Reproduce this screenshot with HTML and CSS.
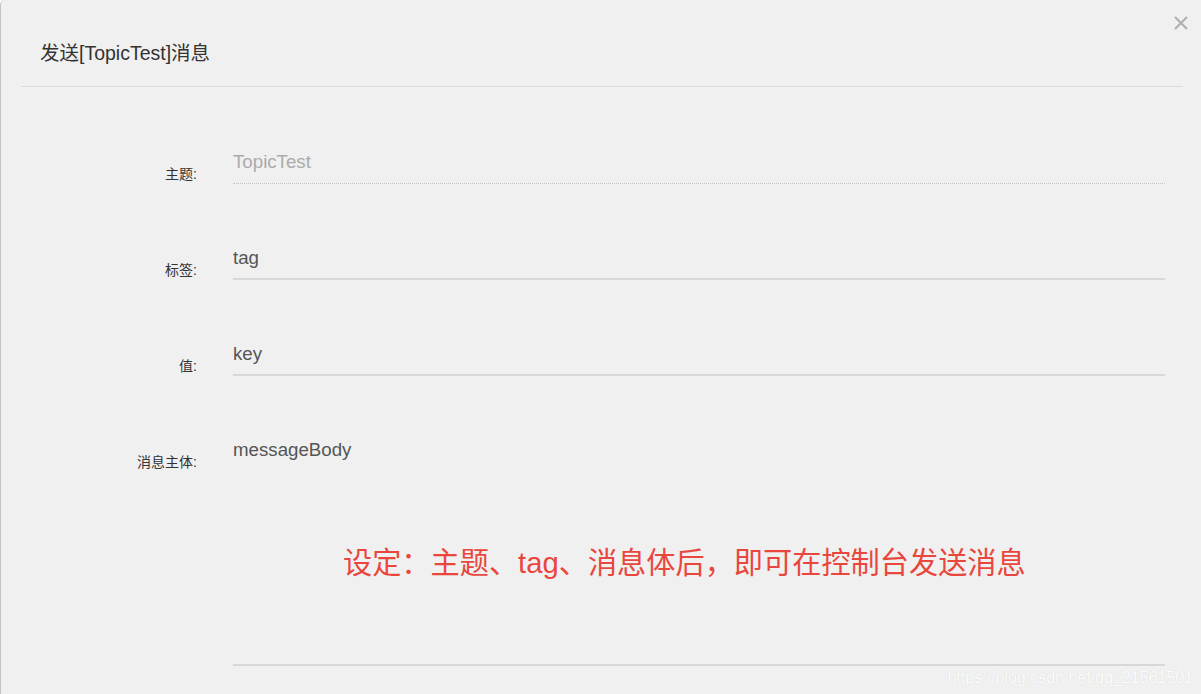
FILE: index.html
```html
<!DOCTYPE html>
<html lang="zh-CN">
<head>
    <meta charset="UTF-8">
    <title>发送消息</title>
    <link rel="stylesheet" href="styles.css">
</head>
<body>
    <div class="modal">
        <span class="close">
            <svg width="16" height="16" viewBox="0 0 16 16">
                <path d="M2 2 L14 14 M14 2 L2 14" stroke="#b0b0b0" stroke-width="2.2" fill="none"/>
            </svg>
        </span>
        <div class="modal-header">
            <h2>发送[TopicTest]消息</h2>
        </div>

        <form class="modal-body">
            <div class="form-group">
                <label>主题:</label>
                <div class="field disabled">TopicTest</div>
            </div>
            <div class="form-group">
                <label>标签:</label>
                <div class="field">tag</div>
            </div>
            <div class="form-group">
                <label>值:</label>
                <div class="field">key</div>
            </div>
            <div class="form-group">
                <label>消息主体:</label>
                <div class="field textarea">
                    messageBody
                    <span class="note">设定：主题、tag、消息体后，即可在控制台发送消息</span>
                </div>
            </div>
        </form>

        <span class="watermark">https://blog.csdn.net/qq_21561501</span>
    </div>
</body>
</html>
```

FILE: styles.css
```css
:root {
    --panelColor: #f0f0f0;
    --lineColor: #d8d8d8;
    --textColor: #333333;
}

body {
    margin: 0;
    padding: 0;
    background: #ffffff;
    font-family: 'Liberation Sans', Arial, 'Noto Sans CJK SC', sans-serif;
    color: var(--textColor);
}

.modal {
    position: relative;
    height: 694px;
    box-sizing: border-box;
    background: var(--panelColor);
    border-left: 1px solid #c4c4c4;
    border-top-left-radius: 5px;
    overflow: hidden;
}

.close {
    position: absolute;
    top: 15px;
    right: 12px;
    width: 16px;
    height: 16px;
}

.close svg {
    display: block;
}

.modal-header {
    margin: 0 18px 0 20px;
    padding: 41px 0 21px 19px;
    border-bottom: 1px solid #dcdcdc;
}

.modal-header h2 {
    margin: 0;
    font-size: 19.5px;
    line-height: 24px;
    font-weight: normal;
    color: #333;
}

.modal-body {
    padding-top: 63px;
}

.form-group {
    display: grid;
    grid-template-columns: 196px 1fr;
    column-gap: 36px;
    align-items: start;
    margin-right: 36px;
    margin-bottom: 62px;
}

label {
    display: block;
    padding-top: 14px;
    text-align: right;
    font-size: 14px;
    line-height: 20px;
    color: #333;
}

.field {
    font-size: 18.7px;
    line-height: 22px;
    padding: 1px 0 9px;
    color: #555;
    border-bottom: 2px solid var(--lineColor);
}

.field.disabled {
    color: #ababab;
    border-bottom: 1px dotted #c4c4c4;
    padding-bottom: 10px;
}

.field.textarea {
    position: relative;
    height: 216px;
}

.note {
    position: absolute;
    left: 110px;
    top: 108px;
    font-size: 29.2px;
    line-height: 34px;
    color: #e9473d;
    white-space: nowrap;
}

.watermark {
    position: absolute;
    right: 8px;
    bottom: 7px;
    font-size: 16px;
    color: rgba(255, 255, 255, 0.95);
    text-shadow: 0 0 1px #d0d0d0;
}
```
